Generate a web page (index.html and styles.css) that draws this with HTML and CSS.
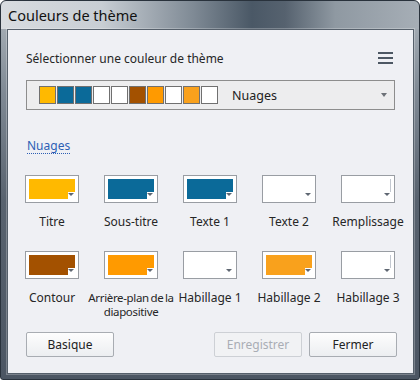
FILE: index.html
```html
<!DOCTYPE html>
<html lang="fr">
<head>
<meta charset="utf-8">
<title>Couleurs de thème</title>
<link rel="stylesheet" href="styles.css">
</head>
<body>
<div class="window">
  <div class="titlebar">Couleurs de thème</div>
  <div class="client">
    <div class="head">
      <span class="head-label">Sélectionner une couleur de thème</span>
      <svg class="menu" width="15" height="12" viewBox="0 0 15 12" aria-hidden="true">
        <rect x="0" y="0" width="15" height="2"/>
        <rect x="0" y="5" width="15" height="2"/>
        <rect x="0" y="10" width="15" height="2"/>
      </svg>
    </div>
    <div class="combo">
      <div class="strip">
        <span class="sw c-gold"></span>
        <span class="sw c-blue"></span>
        <span class="sw c-blue"></span>
        <span class="sw c-white"></span>
        <span class="sw c-white"></span>
        <span class="sw c-brown"></span>
        <span class="sw c-orange"></span>
        <span class="sw c-white"></span>
        <span class="sw c-orange2"></span>
        <span class="sw c-white"></span>
      </div>
      <span class="combo-name">Nuages</span>
      <span class="combo-arrow"></span>
    </div>
    <a class="link">Nuages</a>
    <div class="grid">
      <div class="cell"><div class="pick"><span class="fill c-gold"></span><span class="arrow"></span></div><div class="label">Titre</div></div>
      <div class="cell"><div class="pick"><span class="fill c-blue"></span><span class="arrow"></span></div><div class="label">Sous-titre</div></div>
      <div class="cell"><div class="pick"><span class="fill c-blue"></span><span class="arrow"></span></div><div class="label">Texte 1</div></div>
      <div class="cell"><div class="pick"><span class="fill c-white"></span><span class="arrow"></span></div><div class="label">Texte 2</div></div>
      <div class="cell"><div class="pick"><span class="fill c-white edge"></span><span class="arrow"></span></div><div class="label">Remplissage</div></div>
      <div class="cell"><div class="pick"><span class="fill c-brown"></span><span class="arrow"></span></div><div class="label">Contour</div></div>
      <div class="cell"><div class="pick"><span class="fill c-orange"></span><span class="arrow"></span></div><div class="label tight"><span class="nowrap">Arrière-plan de la</span> diapositive</div></div>
      <div class="cell"><div class="pick"><span class="fill c-white"></span><span class="arrow"></span></div><div class="label">Habillage 1</div></div>
      <div class="cell"><div class="pick"><span class="fill c-orange2"></span><span class="arrow"></span></div><div class="label">Habillage 2</div></div>
      <div class="cell"><div class="pick"><span class="fill c-white edge"></span><span class="arrow"></span></div><div class="label">Habillage 3</div></div>
    </div>
    <div class="buttons">
      <button class="btn">Basique</button>
      <span class="spacer"></span>
      <button class="btn disabled" disabled>Enregistrer</button>
      <button class="btn">Fermer</button>
    </div>
  </div>
</div>
</body>
</html>
```
FILE: styles.css
```css
* { box-sizing: border-box; margin: 0; padding: 0; }
html, body { width: 420px; height: 380px; overflow: hidden; }
body {
  font-family: "Noto Sans", "Open Sans", sans-serif;
  font-size: 12px;
  color: #222;
  background: #fff;
}

.window {
  width: 420px;
  height: 380px;
  border: 1px solid #29323c;
  border-radius: 6px 6px 3px 3px;
  padding: 0 5px 5px 6px;
  display: flex;
  flex-direction: column;
  background:
    linear-gradient(to right, #d8dce0 0%, #c8ced4 24%, #7f8a95 46%, #4a5866 60%, #56626f 68%, #8f99a2 80%, #a6aeb6 100%) top left / 100% 28px no-repeat,
    linear-gradient(to bottom, #b0b7be 0, #808a95 90px, #58626e 200px, #4c5663 100%);
}

.titlebar {
  height: 28px;
  line-height: 28px;
  font-size: 14.5px;
  padding-left: 1px;
  color: #111;
}

.client {
  flex: 1;
  background: #eff0f4;
  border: 1px solid #56606b;
  box-shadow: 0 0 0 1px rgba(255, 255, 255, 0.25);
  padding: 18px 18px 16px 18px;
  display: flex;
  flex-direction: column;
}

.head {
  height: 20px;
  display: flex;
  align-items: center;
  justify-content: space-between;
}
.head-label { font-size: 12px; color: #262626; }
.menu { fill: #4d5763; margin-right: 2px; }

.combo {
  margin-top: 12px;
  height: 30px;
  border: 1px solid #8d8d8d;
  background: #ededee;
  display: flex;
  align-items: center;
  padding-left: 12px;
  padding-right: 7px;
}
.strip { display: flex; gap: 1px; }
.sw {
  display: block;
  width: 17px;
  height: 18px;
  border: 1px solid #707070;
}
.combo-name { margin-left: 14px; font-size: 12.5px; color: #222; }
.combo-arrow {
  margin-left: auto;
  width: 0;
  height: 0;
  border-left: 3.5px solid transparent;
  border-right: 3.5px solid transparent;
  border-top: 4px solid #6d7177;
}

.c-gold { background: #ffb900; }
.c-blue { background: #0b6a99; }
.c-white { background: #ffffff; }
.c-brown { background: #a35100; }
.c-orange { background: #ff9a00; }
.c-orange2 { background: #f9a11c; }

.link {
  align-self: flex-start;
  margin-top: 29px;
  margin-left: 1px;
  line-height: 14px;
  font-size: 12px;
  color: #2d5fb4;
  border-bottom: 1px dotted #2d5fb4;
}

.grid {
  margin-top: 21px;
  margin-left: -13px;
  display: grid;
  grid-template-columns: repeat(5, 79px);
  row-gap: 22px;
}
.cell {
  display: flex;
  flex-direction: column;
  align-items: center;
  padding-right: 1px;
}
.pick {
  position: relative;
  width: 54px;
  height: 28px;
  border: 1px solid #999da3;
  background: #fff;
  padding: 3px;
}
.fill {
  display: block;
  width: 46px;
  height: 20px;
  clip-path: polygon(0 0, 100% 0, 100% 13px, 39px 13px, 39px 100%, 0 100%);
}
.fill.edge { box-shadow: inset -1px 0 0 #c3c8d0; }
.arrow {
  position: absolute;
  right: 4px;
  bottom: 6px;
  width: 0;
  height: 0;
  border-left: 3px solid transparent;
  border-right: 3px solid transparent;
  border-top: 3px solid #5f6772;
}
.label {
  margin-top: 12px;
  line-height: 14px;
  text-align: center;
  white-space: nowrap;
  color: #262626;
}
.label.tight {
  white-space: normal;
  width: 86px;
  font-size: 11.5px;
  letter-spacing: -0.35px;
  word-spacing: -1px;
}
.nowrap { white-space: nowrap; }

.buttons {
  margin-top: auto;
  margin-right: -2px;
  display: flex;
  gap: 7px;
}
.spacer { flex: 1; }
.btn {
  width: 88px;
  height: 25px;
  border: 1px solid #a8acb2;
  border-radius: 2px;
  background: linear-gradient(#fdfdfd, #eceef1);
  font-family: "Noto Sans", "Open Sans", sans-serif;
  font-size: 12px;
  color: #222;
}
.btn.disabled {
  color: #a9adb4;
  border-color: #cdd0d5;
  background: #f1f2f4;
}
```
